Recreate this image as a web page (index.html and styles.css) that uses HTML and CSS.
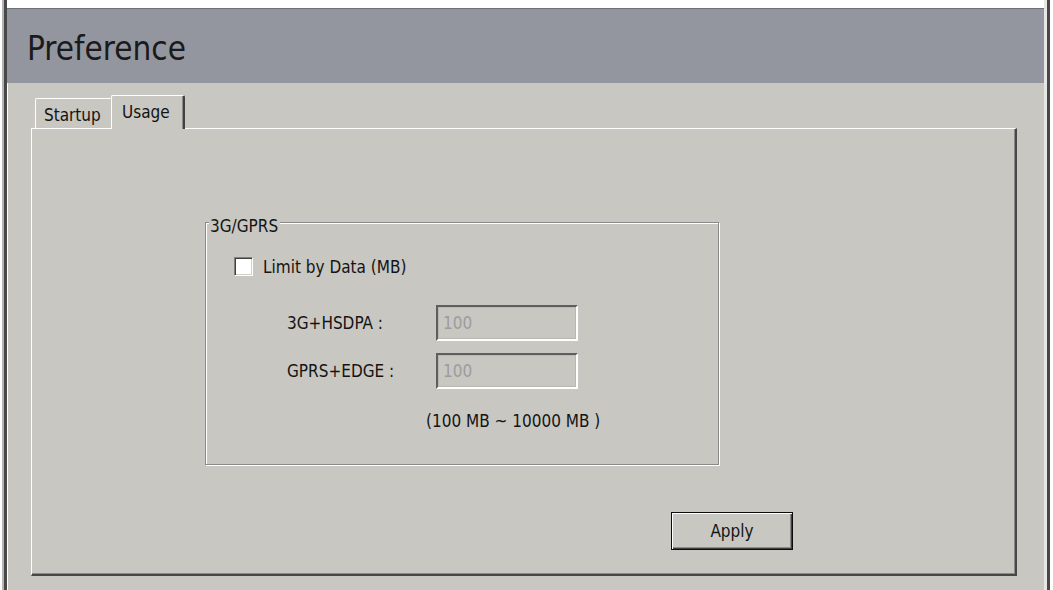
FILE: index.html
```html
<!DOCTYPE html>
<html>
<head>
<meta charset="utf-8">
<link rel="stylesheet" href="styles.css">
</head>
<body>
<div class="frame">
  <div class="window">
    <div class="header"><h1 class="title">Preference</h1></div>
    <div class="content">
      <div class="tabs">
        <div class="tab">Startup</div>
        <div class="tab active">Usage</div>
      </div>
      <div class="panel">
        <div class="group">
          <span class="legend">3G/GPRS</span>
          <label class="check-row">
            <span class="checkbox"></span>
            <span class="check-label">Limit by Data (MB)</span>
          </label>
          <div class="form-grid">
            <span class="field-label">3G+HSDPA :</span>
            <span class="field">100</span>
            <span class="field-label">GPRS+EDGE :</span>
            <span class="field">100</span>
          </div>
          <div class="range">(100 MB ~ 10000 MB )</div>
        </div>
        <button class="apply"><span>Apply</span></button>
      </div>
    </div>
  </div>
</div>
</body>
</html>
```

FILE: styles.css
```css
html, body {
  margin: 0;
  padding: 0;
  background: #ffffff;
}
body {
  width: 1053px;
  height: 590px;
  overflow: hidden;
  font-family: "DejaVu Sans Condensed", "DejaVu Sans", sans-serif;
  font-stretch: condensed;
  font-size: 17px;
  line-height: 20px;
  color: #141414;
}
.frame {
  margin-left: 2px;
  width: 1048px;
  height: 590px;
  box-sizing: border-box;
  border-left: 2px solid #b4b4b4;
  background: #ffffff;
}
.window {
  width: 1046px;
  height: 590px;
  box-sizing: border-box;
  border-left: 3px solid #484848;
  border-right: 3px solid #484848;
  box-shadow: inset 1px 0 0 #ffffff, inset -3px 0 0 #e6e6e4;
  display: flex;
  flex-direction: column;
  background: #c8c7c1;
}
.header {
  margin-right: 3px;
  border-top: 8px solid #ffffff;
  height: 83px;
  box-sizing: border-box;
  background: #93969f;
  box-shadow: inset 0 1px 0 #6e7078;
  padding: 22px 0 0 20px;
}
.title {
  margin: 0;
  font-weight: normal;
  font-size: 33px;
  line-height: 37px;
  color: #1a1a1a;
}
.content {
  flex: 1;
  display: flex;
  flex-direction: column;
  padding: 12px 30px 14px 24px;
  box-sizing: border-box;
}
.tabs {
  display: flex;
  align-items: flex-end;
  padding-left: 4px;
  height: 33px;
  position: relative;
  z-index: 1;
}
.tab {
  height: 30px;
  box-sizing: border-box;
  padding: 6px 8px 0 8px;
  border-top: 1px solid #ffffff;
  border-left: 1px solid #ffffff;
  border-right: 1px solid #404040;
  border-radius: 2px 2px 0 0;
  background: #c8c7c1;
  width: 77px;
}
.tab.active {
  height: 34px;
  width: 74px;
  margin-left: -1px;
  margin-bottom: -1px;
  padding: 6px 8px 0 10px;
  border-right: 2px solid #404040;
  box-shadow: inset -1px 0 0 #8a8a8a;
  position: relative;
}
.panel {
  flex: 1;
  box-sizing: border-box;
  border-top: 1px solid #ffffff;
  border-left: 1px solid #ffffff;
  border-right: 2px solid #474747;
  border-bottom: 2px solid #474747;
  box-shadow: inset -1px -1px 0 #8a8a8a;
  padding: 93px 0 0 173px;
  display: flex;
  flex-direction: column;
  align-items: flex-start;
}
.group {
  position: relative;
  width: 514px;
  height: 243px;
  box-sizing: border-box;
  border: 1px solid #8a8a8a;
  box-shadow: inset 1px 1px 0 #ffffff, 1px 1px 0 #ffffff;
  padding: 34px 0 0 28px;
}
.legend {
  position: absolute;
  top: -7px;
  left: 3px;
  padding: 0 2px 0 1px;
  background: #c8c7c1;
  line-height: 20px;
}
.check-row {
  display: flex;
  align-items: center;
  height: 19px;
}
.checkbox {
  width: 19px;
  height: 19px;
  box-sizing: border-box;
  background: #ffffff;
  border-top: 1px solid #808080;
  border-left: 1px solid #808080;
  border-bottom: 1px solid #ffffff;
  border-right: 1px solid #ffffff;
  box-shadow: inset 1px 1px 0 #404040, inset -1px -1px 0 #d4d0c8;
}
.check-label {
  margin-left: 10px;
}
.form-grid {
  display: grid;
  grid-template-columns: 149px 142px;
  grid-auto-rows: 36px;
  row-gap: 12px;
  margin: 29px 0 0 53px;
  align-items: center;
}
.field {
  height: 36px;
  box-sizing: border-box;
  border-top: 2px solid #5e5e5e;
  border-left: 2px solid #5e5e5e;
  border-bottom: 2px solid #ffffff;
  border-right: 2px solid #ffffff;
  box-shadow: inset 0 0 0 1px #b8b7b1;
  padding: 6px 0 0 5px;
  color: #9c9c9c;
  background: #c8c7c1;
}
.range {
  margin: 22px 0 0 192px;
}
.apply {
  margin: 47px 0 0 466px;
  width: 122px;
  height: 38px;
  box-sizing: border-box;
  border: 1px solid #0c0c0c;
  background: #c8c7c1;
  padding: 0;
  font: inherit;
  color: inherit;
  display: flex;
  align-items: center;
  justify-content: center;
  box-shadow: inset 1px 1px 0 #ffffff, inset -1px -1px 0 #404040, inset -2px -2px 0 #8a8a8a;
}
```
